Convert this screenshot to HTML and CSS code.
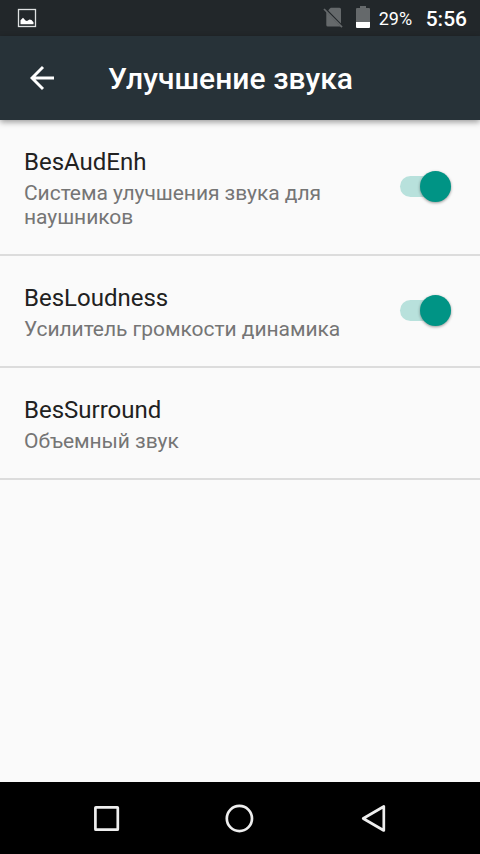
FILE: index.html
```html
<!DOCTYPE html>
<html lang="ru">
<head>
<meta charset="utf-8">
<title>Улучшение звука</title>
<link rel="stylesheet" href="styles.css">
</head>
<body>
<div class="screen">
  <div class="status-bar">
    <svg class="picture-icon" width="20" height="20" viewBox="0 0 20 20"><rect x="1.5" y="1.5" width="17" height="17" fill="none" stroke="#dfe1e2" stroke-width="1.3"/><path d="M3.5 16.2V12.2L6 9.8L8.5 12.5L10 13L12.5 11.5L14.5 12L16.5 14.2V16.2Z" fill="#fff"/></svg>
    <svg class="sim-icon" width="20" height="22" viewBox="0 0 20 22"><path d="M6.3 3L7.8 1.7H16.5Q18 1.7 18 3.2V17.5L5.3 4.4ZM3.3 5.8L17.5 20.4Q17.2 20.6 16.5 20.6H4.8Q3.3 20.6 3.3 19.1Z" fill="#65696b"/><path d="M1 3L19 21.2" stroke="#65696b" stroke-width="1.7"/></svg>
    <svg class="battery-icon" width="14" height="22" viewBox="0 0 14 22"><path d="M0 3Q0 2 1 2H4V0H10V2H13Q14 2 14 3V16H0Z" fill="#65696b"/><path d="M0 16H14V21Q14 22 13 22H1Q0 22 0 21Z" fill="#fff"/></svg>
    <span class="battery-level">29%</span>
    <span class="clock">5:56</span>
  </div>
  <header class="app-bar">
    <svg class="back-icon" width="26" height="26" viewBox="0 0 26 26"><path d="M24 13H2.5M13 2L2 13L13 24" fill="none" stroke="#fff" stroke-width="2.9"/></svg>
    <h1 class="title">Улучшение звука</h1>
  </header>
  <main class="list">
    <div class="row">
      <div class="texts"><div class="name">BesAudEnh</div><div class="summary">Система улучшения звука для наушников</div></div>
      <div class="switch"><div class="thumb"></div></div>
    </div>
    <div class="row">
      <div class="texts"><div class="name">BesLoudness</div><div class="summary">Усилитель громкости динамика</div></div>
      <div class="switch"><div class="thumb"></div></div>
    </div>
    <div class="row">
      <div class="texts"><div class="name">BesSurround</div><div class="summary">Объемный звук</div></div>
    </div>
  </main>
  <nav class="nav-bar">
    <svg width="30" height="30" viewBox="0 0 30 30"><rect x="3.4" y="4.3" width="22.4" height="22.4" rx=".5"/></svg>
    <svg width="30" height="30" viewBox="0 0 30 30"><circle cx="14.4" cy="15.5" r="12.6"/></svg>
    <svg width="30" height="30" viewBox="0 0 30 30"><path d="M25.8 3.5V27.5L5.2 15.5Z"/></svg>
  </nav>
</div>
</body>
</html>
```
FILE: styles.css
```css
* { box-sizing: border-box; }
body {
  margin: 0;
  font-family: Roboto, "Liberation Sans", sans-serif;
}
.screen {
  display: flex;
  flex-direction: column;
  width: 480px;
  height: 854px;
  overflow: hidden;
  background: #fafafa;
}
.status-bar {
  display: flex;
  align-items: center;
  height: 36px;
  padding: 0 13px 0 17px;
  background: #22272a;
  color: #fff;
}
.sim-icon { margin: 0 0 2px auto; }
.battery-icon { margin: 0 9px 2px 13px; }
.battery-level {
  width: 34px;
  font-size: 18px;
  line-height: 22px;
  margin-top: 2px;
}
.clock {
  margin-left: 13px;
  font-size: 21px;
  font-weight: 500;
  line-height: 24px;
  margin-top: 2px;
}
.app-bar {
  display: flex;
  align-items: center;
  height: 84px;
  padding: 0 30px;
  background: #273238;
  color: #fff;
  box-shadow: 0 2px 6px rgba(0, 0, 0, .4);
}
.title {
  margin: 2px 0 0 52px;
  font-size: 30px;
  font-weight: 500;
  line-height: 36px;
  letter-spacing: .05px;
}
.list { flex: 1; }
.row {
  display: flex;
  align-items: center;
  justify-content: space-between;
  padding: 26px 29px 25px 24px;
  border-bottom: 2px solid #dcdcdc;
}
.texts { width: 340px; }
.name {
  font-size: 24px;
  line-height: 32px;
  color: #212121;
}
.summary {
  margin-top: 3px;
  font-size: 21px;
  line-height: 24px;
  letter-spacing: -.05px;
  color: #757575;
}
.switch {
  display: flex;
  align-items: center;
  justify-content: flex-end;
  width: 51px;
  height: 21px;
  margin-bottom: 2px;
  border-radius: 11px;
  background: #b8e1dc;
}
.thumb {
  flex: none;
  width: 31px;
  height: 31px;
  border-radius: 50%;
  background: #009485;
  box-shadow: 0 1px 3px rgba(0, 0, 0, .4);
}
.nav-bar {
  display: flex;
  align-items: center;
  justify-content: center;
  gap: 103px;
  height: 72px;
  background: #000;
}
.nav-bar svg {
  fill: none;
  stroke: #eee;
  stroke-width: 2.7;
  stroke-linejoin: round;
}
```
